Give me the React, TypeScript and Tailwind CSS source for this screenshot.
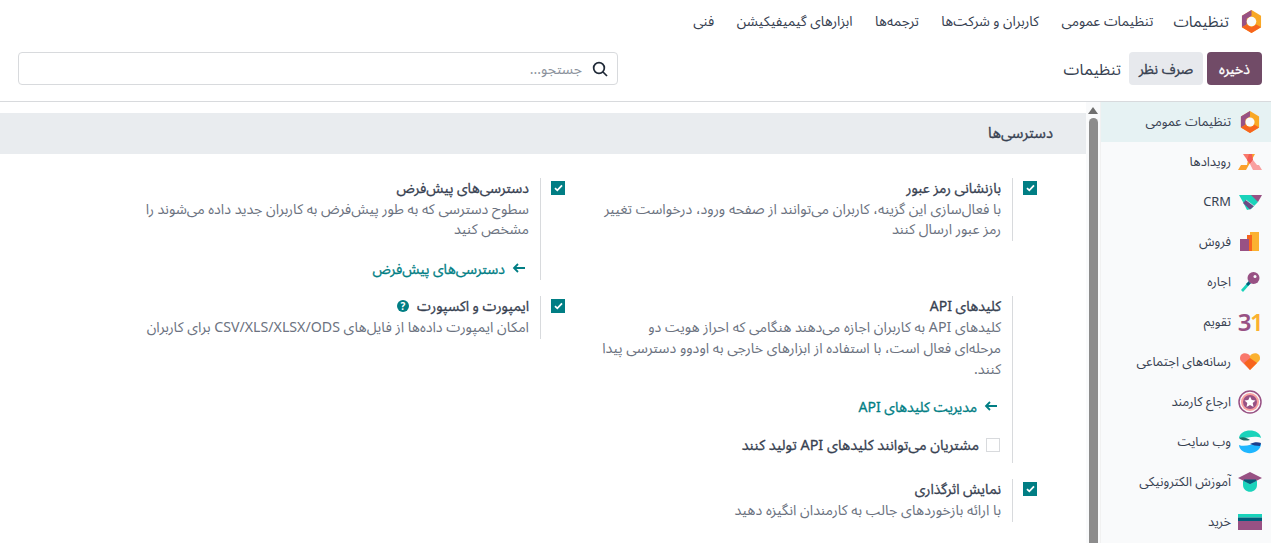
import React from "react";

const F = "font-['Noto_Sans','Noto_Sans_Arabic','DejaVu_Sans',sans-serif]";

function Logo({ s = 22 }: { s?: number }) {
  return (
    <svg width={s} height={s * 1.1} viewBox="0 0 22 24">
      <path d="M11 0 L21 6 V18 L11 24 L1 18 V6Z" fill="#f9a825" />
      <path d="M11 0 L1 6 V18 L6 15 V9 L11 6Z" fill="#985184" />
      <path d="M1 18 L11 24 L21 18 L16 15 L11 18 L6 15Z" fill="#f7641e" />
      <circle cx="11" cy="12" r="5" fill="#f9fafb" />
    </svg>
  );
}

const icons: Record<string, React.ReactNode> = {
  settings: <Logo s={20} />,
  events: (
    <svg width="24" height="16" viewBox="0 0 24 16">
      <path d="M5 0 H11 L15 6 L12 10Z" fill="#f9786c" />
      <path d="M11 0 H17 L8 16 H0 L3 11 H9Z" fill="#fba12c" />
      <path d="M11 0 H14 L15 6 L12 10 L9 6Z" fill="#f25c54" />
      <path d="M12 10 L15 6 L19 11 H21 L24 16 H15Z" fill="#f9a0a0" />
    </svg>
  ),
  crm: (
    <svg width="23" height="15" viewBox="0 0 23 15">
      <path d="M0 0 H15 L19 7 L12 14 L8 15 L4 7Z" fill="#1ad3bb" />
      <path d="M12 0 H23 L19 7 L15 3Z" fill="#985184" />
      <path d="M4 8 L7 5 L15 11 L11 14.5Z" fill="#6b4a84" />
      <path d="M7 5 L15 11" stroke="#fff" strokeWidth="0.6" />
    </svg>
  ),
  sales: (
    <svg width="20" height="20" viewBox="0 0 20 20">
      <rect x="10" y="0" width="9" height="19" fill="#fbb130" />
      <rect x="7" y="3" width="5" height="16" fill="#f7641e" />
      <rect x="0" y="7" width="9" height="12" fill="#985184" />
    </svg>
  ),
  rental: (
    <svg width="20" height="20" viewBox="0 0 20 20">
      <path d="M1 18 L9 9 L11 11 L3 20Z" fill="#1ad3bb" />
      <path d="M6 12 L9 9 L11 11 L8 14Z" fill="#005e7a" />
      <circle cx="13.5" cy="6" r="6" fill="#985184" />
      <circle cx="15" cy="4.5" r="1.5" fill="#f9fafb" />
    </svg>
  ),
  calendar: (
    <span className="text-[24px] leading-[22px] font-semibold flex tracking-[-1.5px] font-['Noto_Sans',sans-serif]" dir="ltr">
      <span className="text-[#985184]">3</span>
      <span className="text-[#fbb130]">1</span>
    </span>
  ),
  social: (
    <svg width="20" height="18" viewBox="0 0 20 18">
      <path d="M10 3 C8 -1 0 -1 0 5 C0 7 1 8 2 9 L10 17Z" fill="#f9786c" />
      <path d="M10 3 C12 -1 20 -1 20 5 C20 7 19 8 18 9 L10 17Z" fill="#fbb130" />
      <path d="M10 5 L17 10 L10 17 L4 10Z" fill="#f7641e" />
    </svg>
  ),
  referral: (
    <svg width="24" height="24" viewBox="0 0 24 24">
      <circle cx="12" cy="12" r="11" fill="#f9fafb" stroke="#985184" strokeWidth="1.5" />
      <circle cx="12" cy="12" r="9" fill="#f9a0a0" />
      <circle cx="12" cy="12" r="7" fill="#985184" />
      <path d="M12 6.5l1.7 3.5 3.8.5-2.8 2.6.8 3.8-3.5-2-3.5 2 .8-3.8-2.8-2.6 3.8-.5z" fill="#fff" />
    </svg>
  ),
  website: (
    <svg width="24" height="24" viewBox="0 0 24 24">
      <path d="M1 8 C2 -2 22 -2 23 8 C16 5 8 9 1 8Z" fill="#1ad3bb" />
      <path d="M1 8 C6 6 9 8 12 10 C8 11 4 11 1 8Z" fill="#1f6b66" />
      <path d="M1 15 C8 18 16 12 23 14 C22 26 2 26 1 15Z" fill="#1fb6ff" />
      <path d="M12 14 C16 12 20 12 23 13 L22 16 C18 16 15 15 12 14Z" fill="#1a3e8c" />
    </svg>
  ),
  elearning: (
    <svg width="24" height="20" viewBox="0 0 24 20">
      <path d="M5 7 H19 V13 C19 22 5 22 5 13Z" fill="#1ad3bb" />
      <path d="M12 0 L24 6 L12 12 L0 6Z" fill="#985184" />
      <path d="M6 7.5 H18 V9 L12 12 L6 9Z" fill="#005e7a" />
    </svg>
  ),
  purchase: (
    <svg width="24" height="16" viewBox="0 0 24 16">
      <rect width="24" height="3.5" y="0" fill="#1ad3bb" />
      <rect width="24" height="3.5" y="3.5" fill="#005e7a" />
      <rect width="24" height="9" y="7" fill="#985184" />
    </svg>
  ),
};

const apps: [string, string, boolean?][] = [
  ["تنظیمات عمومی", "settings", true],
  ["رویدادها", "events"],
  ["CRM", "crm"],
  ["فروش", "sales"],
  ["اجاره", "rental"],
  ["تقویم", "calendar"],
  ["رسانه‌های اجتماعی", "social"],
  ["ارجاع کارمند", "referral"],
  ["وب سایت", "website"],
  ["آموزش الکترونیکی", "elearning"],
  ["خرید", "purchase"],
];

function Check({ on = true }: { on?: boolean }) {
  return on ? (
    <span className="w-[14px] h-[14px] bg-[#017e84] flex items-center justify-center shrink-0">
      <svg width="9" height="8" viewBox="0 0 9 8">
        <path d="M1 4.2 L3.3 6.3 L8 1.4" fill="none" stroke="#fff" strokeWidth="1.8" />
      </svg>
    </span>
  ) : (
    <span className="w-[14px] h-[14px] bg-white border border-[#d8dadd] shrink-0" />
  );
}

const medium = "font-normal [-webkit-text-stroke:0.3px]";

function Setting({
  title,
  desc,
  link,
  help,
  extra,
  checkbox = true,
  wide,
}: {
  title: string;
  desc: string[];
  link?: string;
  help?: boolean;
  extra?: string;
  checkbox?: boolean;
  wide?: boolean;
}) {
  return (
    <div className="flex items-start">
      <div className="w-[36px] pr-[12px] pt-[3px] h-[20px] flex shrink-0">{checkbox && <Check />}</div>
      <div className={`border-r border-[#d8dadd] pr-[11px] flex-1 min-w-0 ${wide ? "pb-[8px]" : "pb-[2px]"}`}>
        <div className={`flex items-center gap-[8px] h-[19px] text-[14px] text-[#374151] ${medium} ${wide ? "mb-[1px]" : "mb-[2px]"}`}>
          <span>{title}</span>
          {help && (
            <svg width="12" height="12" viewBox="0 0 12 12">
              <circle cx="6" cy="6" r="6" fill="#017e84" />
              <text x="6" y="9.5" textAnchor="middle" fontSize="10" fontWeight="700" fill="#fff" fontFamily="Noto Sans">?</text>
            </svg>
          )}
        </div>
        <div className={`text-[14.2px] text-[#6b7280] ${wide ? "leading-[21px]" : "leading-[20px]"}`}>
          {desc.map((d) => (
            <div key={d} className="whitespace-nowrap">{d}</div>
          ))}
        </div>
        {link && (
          <div className={`${wide ? "mt-[17px]" : "mt-[19px]"} h-[20px] flex items-center gap-[7px] pr-[4px] text-[14px] text-[#017e84] ${medium}`}>
            <svg width="13" height="10" viewBox="0 0 13 10">
              <path d="M13 5 H2 M6 1 L2 5 L6 9" fill="none" stroke="#017e84" strokeWidth="1.8" />
            </svg>
            <span>{link}</span>
          </div>
        )}
        {extra && (
          <div className={`mt-[19px] h-[20px] flex items-center gap-[7px] pr-[1px] text-[14.4px] text-[#374151] ${medium}`}>
            <Check on={false} />
            <span>{extra}</span>
          </div>
        )}
      </div>
    </div>
  );
}

export default function App() {
  return (
    <div dir="rtl" className={`w-[1271px] h-[543px] overflow-hidden bg-white flex flex-col text-[#374151] ${F}`}>
      <nav className="h-[42px] flex items-center shrink-0 pr-[9px] pt-[1px]">
        <Logo s={21} />
        <span className="mr-[12px] text-[15.5px]">تنظیمات</span>
        <div className="flex items-center gap-[22.5px] mr-[20px] text-[13.8px]">
          <span>تنظیمات عمومی</span>
          <span>کاربران و شرکت‌ها</span>
          <span>ترجمه‌ها</span>
          <span>ابزارهای گیمیفیکیشن</span>
          <span>فنی</span>
        </div>
      </nav>
      <div className="h-[60px] flex items-start shrink-0 border-b border-[#d8dadd] pt-[10px] pr-[9px]">
        <button className={`h-[33px] w-[55px] rounded bg-[#714b67] text-white text-[14px] ${medium}`}>ذخیره</button>
        <button className={`h-[33px] w-[74px] mr-[4px] rounded bg-[#e7e9ed] text-[#374151] text-[14px] ${medium}`}>صرف نظر</button>
        <span className="mr-[8px] w-[58px] h-[33px] flex items-center text-[16px] whitespace-nowrap">تنظیمات</span>
        <div className="mr-[445px] w-[600px] h-[33px] border border-[#d8dadd] rounded flex items-center pr-[9px] text-[14px] text-[#8b929c]">
          <svg width="16" height="16" viewBox="0 0 24 24" fill="none" stroke="#1f2937" strokeWidth="2.6">
            <circle cx="10.5" cy="10.5" r="8" />
            <path d="M16.5 16.5 L22.5 22.5" />
          </svg>
          <span className="mr-[10px]">جستجو...</span>
        </div>
      </div>
      <div className="flex flex-1 min-h-0">
        <aside className="w-[170px] bg-[#f9fafb] shrink-0 overflow-hidden">
          {apps.map(([name, icon, active]) => (
            <div key={name} className={`h-[40px] flex items-center text-[12.85px] ${active ? "bg-[#e6f2f3]" : ""}`}>
              <span className="w-[40px] flex justify-center shrink-0 pr-[2px]">{icons[icon]}</span>
              <span className="pb-[1px]">{name}</span>
            </div>
          ))}
        </aside>
        <div className="w-[15px] bg-[#f9fafb] border-r border-[#f1f1f1] shrink-0 flex flex-col items-center pt-[5px]">
          <span className="w-0 h-0 border-x-[5px] border-x-transparent border-b-[7px] border-b-[#6e6e6e]" />
          <span className="mt-[4px] w-[9px] flex-1 rounded-t-full bg-[#8c8c8c]" />
        </div>
        <main className="flex-1 min-w-0 pt-[11px]">
          <div className={`h-[41px] bg-[#e9ecef] flex items-center pr-[33px] pb-[3px] text-[14.8px] text-[#374151] ${medium}`}>دسترسی‌ها</div>
          <div className="grid grid-cols-[472px_472px] gap-y-[16px] pt-[24px] pr-[37px] items-start">
            <Setting
              title="بازنشانی رمز عبور"
              desc={[
                "با فعال‌سازی این گزینه، کاربران می‌توانند از صفحه ورود، درخواست تغییر",
                "رمز عبور ارسال کنند",
              ]}
            />
            <Setting
              title="دسترسی‌های پیش‌فرض"
              desc={[
                "سطوح دسترسی که به طور پیش‌فرض به کاربران جدید داده می‌شوند را",
                "مشخص کنید",
              ]}
              link="دسترسی‌های پیش‌فرض"
            />
            <Setting
              title="کلیدهای API"
              checkbox={false}
              wide
              desc={[
                "کلیدهای API به کاربران اجازه می‌دهند هنگامی که احراز هویت دو",
                "مرحله‌ای فعال است، با استفاده از ابزارهای خارجی به اودوو دسترسی پیدا",
                "کنند.",
              ]}
              link="مدیریت کلیدهای API"
              extra="مشتریان می‌توانند کلیدهای API تولید کنند"
            />
            <Setting
              title="ایمپورت و اکسپورت"
              help
              desc={["امکان ایمپورت داده‌ها از فایل‌های CSV/XLS/XLSX/ODS برای کاربران"]}
            />
            <Setting title="نمایش اثرگذاری" desc={["با ارائه بازخوردهای جالب به کارمندان انگیزه دهید"]} />
          </div>
        </main>
      </div>
    </div>
  );
}
